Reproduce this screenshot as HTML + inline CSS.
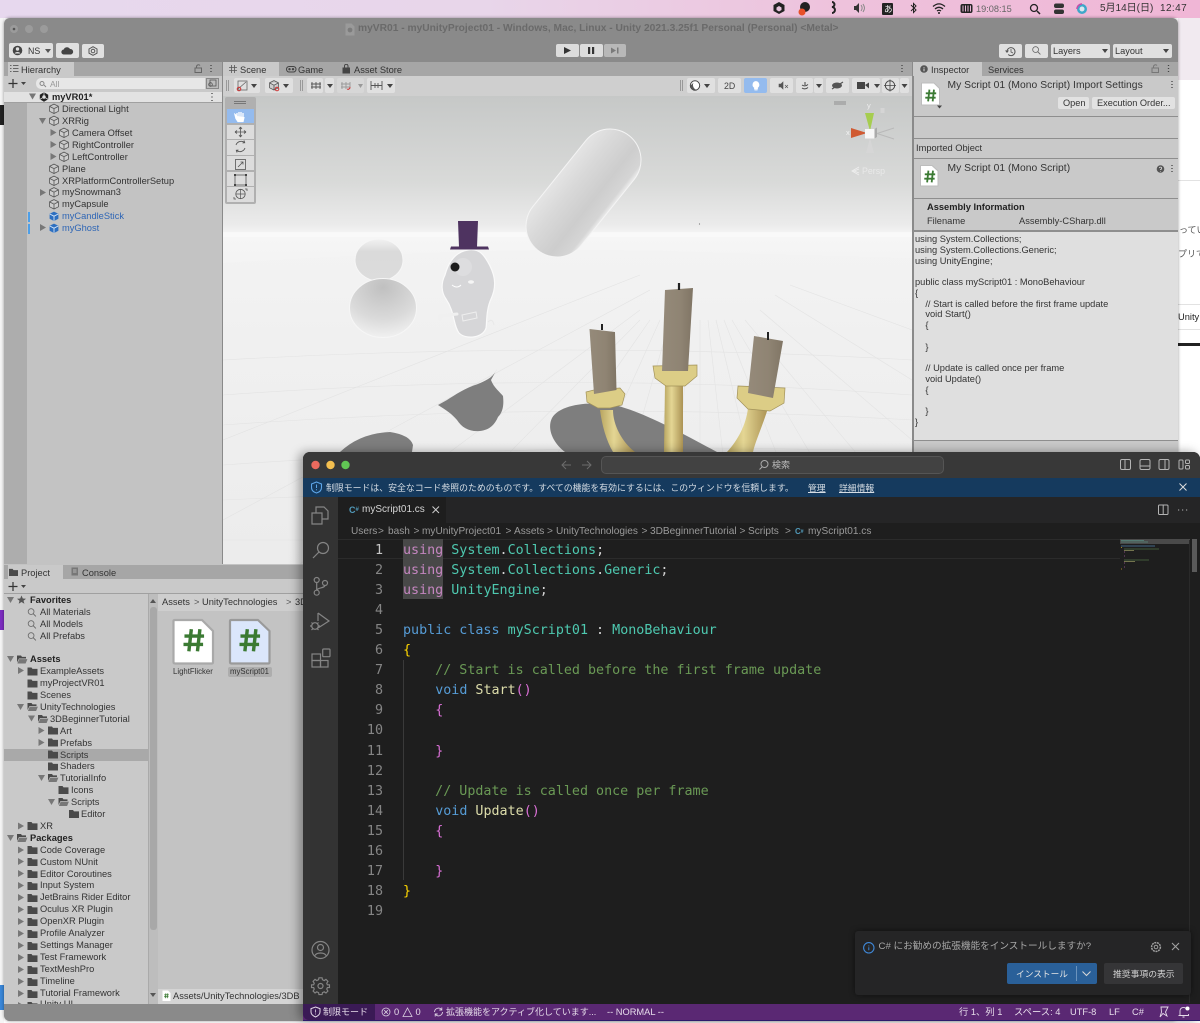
<!DOCTYPE html>
<html lang="ja">
<head>
<meta charset="utf-8">
<title>myVR01</title>
<style>
html,body{margin:0;padding:0;background:#fff}
#root{position:relative;width:1200px;height:1023px;overflow:hidden;font-family:"Liberation Sans","Noto Sans CJK JP",sans-serif;background:#fff;filter:blur(.35px)}
.b{position:absolute}
.r{position:absolute;white-space:nowrap;font-size:9.3px;line-height:12px;color:#333}
.s{position:absolute}
.bold{font-weight:bold;color:#222}
.btn{position:absolute;background:#e0e0e0;border-radius:2px}
.v{position:absolute;white-space:nowrap;font-size:9.4px;line-height:12px;color:#ccc}
.bc{position:absolute;white-space:nowrap;top:525.5px;font-size:10.1px;line-height:12px;color:#9a9a9a}
.ln{position:absolute;left:345px;width:38px;margin-top:1.5px;text-align:right;color:#858585;font:13.37px/20px "DejaVu Sans Mono","Liberation Mono",monospace}
.c{position:absolute;left:403px;margin-top:1.5px;white-space:pre;color:#d4d4d4;font:13.37px/20px "DejaVu Sans Mono","Liberation Mono",monospace}
.k{color:#c586c0}.t{color:#4ec9b0}.w{color:#569cd6}.g{color:#6a9955}.y{color:#ffd700}.f{color:#dcdcaa}.p{color:#da70d6}
</style>
</head>
<body>
<div id="root">
<svg width="0" height="0" style="position:absolute">
<defs>
<g id="cube"><path d="M5 .6 9.4 2.8V7.8L5 10 .6 7.8V2.8ZM.8 3 5 5.2 9.2 3M5 5.2V9.8" fill="#cdcdcd" stroke="#555" stroke-width=".8"/></g>
<g id="bcube"><path d="M5 .6 9.4 2.8V7.8L5 10 .6 7.8V2.8Z" fill="#2d6fc0"/><path d="M.8 3 5 5.2 9.2 3M5 5.2V9.8" fill="none" stroke="#d6e6f7" stroke-width=".9"/></g>
<path id="tr" d="M0 0 6 3.5 0 7Z" fill="#777"/>
<path id="td" d="M0 0H7L3.5 6Z" fill="#777"/>
<path id="fld" d="M0 1H4L5 2.4H10V9H0Z" fill="#4a4a4a"/>
<g id="fldo"><path d="M0 1H4L5 2.4H9V4H2L0 8Z" fill="#4a4a4a"/><path d="M2.2 4.6H10.4L8.6 9H.4Z" fill="#777"/></g>
<g id="mag"><circle cx="3.6" cy="3.6" r="2.9" fill="none" stroke="#666" stroke-width=".8"/><path d="M5.7 5.7 8.4 8.4" stroke="#666" stroke-width=".9"/></g>
<g id="hash"><path d="M3.4 .5 2.4 9.5M6.9 .5 5.9 9.5M.6 3.3H8.6M.2 6.7H8.2" stroke="#3b7a33" stroke-width="1.4" fill="none"/></g>
</defs>
</svg>

<!-- desktop / menu bar -->
<div class="b" style="left:0;top:0;width:1200px;height:18px;background:linear-gradient(90deg,#e7d8ee 0,#e8d6ea 40%,#eec2dc 70%,#f0b6d6 100%)"></div>
<div class="b" style="left:1178px;top:18px;width:22px;height:62px;background:#f1eaf0"></div>
<div class="b" style="left:0;top:18px;width:4px;height:1005px;background:#f5f5f5"></div>
<div class="b" style="left:0;top:105px;width:4px;height:20px;background:#222"></div>
<div class="b" style="left:0;top:610px;width:4px;height:20px;background:#7d2dc0"></div>
<div class="b" style="left:0;top:985px;width:4px;height:25px;background:#3a87d8"></div>
<div class="b" style="left:1178px;top:304px;width:22px;height:1px;background:#e2e2e2"></div>
<div class="b" style="left:1178px;top:329px;width:22px;height:1px;background:#e2e2e2"></div>
<div class="b" style="left:1178px;top:343px;width:22px;height:3px;background:#222"></div>
<div class="b" style="left:1178px;top:180px;width:22px;height:1px;background:#e2e2e2"></div>
<div class="r" style="left:1179px;top:224px;font-size:9px;width:21px;overflow:hidden;color:#555">ってい</div>
<div class="r" style="left:1178px;top:248px;font-size:9px;width:22px;overflow:hidden;color:#555">プリで</div>
<div class="r" style="left:1178px;top:311px;width:22px;overflow:hidden;color:#222">Unity</div>

<svg class="s" style="left:0;top:0" width="1200" height="18">
<g transform="translate(779,8)"><path d="M0-6 5.5-3V3L0 6-5.5 3V-3Z" fill="#222"/><path d="M0-2 2.5-.5V2L0 3.5-2.5 2V-.5Z" fill="#e9c6de"/></g>
<circle cx="805" cy="7" r="5" fill="#222"/><circle cx="802" cy="12" r="3.5" fill="#e8502a"/>
<path d="M832 2a2.5 2.5 0 1 1-.1 5 3 3 0 1 1 .1 6" fill="none" stroke="#222" stroke-width="2"/>
<path d="M854 6h2l3-3v10l-3-3h-2Z" fill="#333"/><path d="M861 5c1.500 2 1.500 4 0 6M863 4c2 3 2 5 0 8" stroke="#888" fill="none"/>
<rect x="882" y="3" width="11" height="12" rx="1" fill="#222"/>
<path d="M911 5 916 10 913.500 12.500V3.500L916 6 911 11" fill="none" stroke="#222"/>
<path d="M933 6.500c4-3.500 8-3.500 12 0M935 9c2.700-2.300 5.300-2.300 8 0M937 11c1.300-1 2.700-1 4 0" fill="none" stroke="#222" stroke-width="1.300"/><circle cx="939" cy="13" r="1" fill="#222"/>
<rect x="960.500" y="4" width="12" height="9" rx="2" fill="#222"/><path d="M963 5.500v6M965.500 5.500v6M968 5.500v6M970.500 5.500v6" stroke="#e9b8d8"/>
<circle cx="1034" cy="8" r="3.500" fill="none" stroke="#222" stroke-width="1.300"/><path d="M1037 11l3 3" stroke="#222" stroke-width="1.500"/>
<rect x="1054" y="3.500" width="10" height="4.500" rx="2" fill="#333"/><rect x="1054" y="9.500" width="10" height="4.500" rx="2" fill="#333"/>
<circle cx="1082" cy="9" r="5" fill="#3fa7c9"/><circle cx="1082" cy="9" r="2.500" fill="#dbe8f0"/><path d="M1077 9a5 5 0 0 1 5-5" stroke="#c44ea8" fill="none" stroke-width="1.500"/>
</svg>
<div class="r" style="left:884px;top:3px;font-size:8.500px;color:#eee">あ</div>
<div class="r" style="left:976px;top:3px;font-size:9.200px;color:#666">19:08:15</div>
<div class="r" style="left:1100px;top:3px;font-size:10px;color:#333">5月14日(日)</div>
<div class="r" style="left:1160px;top:3px;font-size:10px;color:#333;letter-spacing:.4px">12:47</div>

<!-- Unity window -->
<div class="b" style="left:4px;top:18px;width:1174px;height:1003px;background:#8a8a8a;border-radius:6px 6px 6px 6px;box-shadow:0 0 3px rgba(0,0,0,.4)"></div>
<svg class="s" style="left:4px;top:18px" width="60" height="24"><circle cx="10" cy="11" r="4" fill="#9b9b9b"/><circle cx="10" cy="11" r="1.300" fill="#555"/><circle cx="25" cy="11" r="4" fill="#9b9b9b"/><circle cx="40" cy="11" r="4" fill="#9b9b9b"/></svg>
<svg class="s" style="left:345px;top:23px" width="10" height="13"><path d="M.5.500H6.500L9.500 3.500V12.500H.5Z" fill="#9a9a9a"/><circle cx="5" cy="7" r="2.400" fill="#7c7c7c"/></svg>
<div class="r" style="left:358px;top:23px;font-size:10.240px;font-weight:bold;color:#6a6a6a">myVR01 - myUnityProject01 - Windows, Mac, Linux - Unity 2021.3.25f1 Personal (Personal) &lt;Metal&gt;</div>

<!-- top toolbar -->
<div class="btn" style="left:9px;top:43px;width:44px;height:15px"></div>
<svg class="s" style="left:12px;top:45px" width="40" height="11"><circle cx="5.500" cy="5.500" r="4.800" fill="#444"/><circle cx="5.500" cy="4" r="1.700" fill="#e0e0e0"/><path d="M2.500 8.500c1-2 5-2 6 0" fill="#e0e0e0"/><path d="M33 4h6l-3 4Z" fill="#555"/></svg>
<div class="r" style="left:28px;top:45px;font-size:8.800px">NS</div>
<div class="btn" style="left:56px;top:43px;width:23px;height:15px"></div>
<svg class="s" style="left:61px;top:46px" width="13" height="9"><path d="M3 8.500a2.500 2.500 0 0 1-.3-5A3.500 3.500 0 0 1 9 3a2.800 2.800 0 0 1 1 5.500Z" fill="#444"/></svg>
<div class="btn" style="left:82px;top:44px;width:22px;height:14px"></div>
<svg class="s" style="left:88px;top:46px" width="10" height="10"><path d="M5 .7 9 3V7.200L5 9.300 1 7.200V3Z" fill="none" stroke="#555"/><circle cx="5" cy="5" r="1.800" fill="none" stroke="#555"/></svg>

<div class="btn" style="left:556px;top:44px;width:23px;height:13px;background:#dcdcdc"></div>
<div class="btn" style="left:580px;top:44px;width:23px;height:13px;background:#dcdcdc"></div>
<div class="btn" style="left:604px;top:44px;width:22px;height:13px;background:#b8b8b8"></div>
<svg class="s" style="left:556px;top:44px" width="70" height="13"><path d="M8 3 15 6.500 8 10Z" fill="#333"/><path d="M32 3h2.200v7H32ZM36 3h2.200v7H36Z" fill="#333"/><path d="M55 3.500 60 6.500 55 9.500ZM61 3.500h1.500v6H61Z" fill="#7a7a7a"/></svg>

<div class="btn" style="left:999px;top:44px;width:23px;height:14px"></div>
<svg class="s" style="left:1005px;top:46px" width="12" height="11"><path d="M2 5.500a4 4 0 1 1 1.200 3" fill="none" stroke="#555"/><path d="M6 3v3l2 1" fill="none" stroke="#555" stroke-width=".8"/><path d="M0 4.500h4L2 7Z" fill="#555"/></svg>
<div class="btn" style="left:1025px;top:44px;width:23px;height:14px"></div>
<svg class="s" style="left:1032px;top:46px" width="11" height="10"><use href="#mag"/></svg>
<div class="btn" style="left:1051px;top:44px;width:59px;height:14px"></div>
<div class="r" style="left:1053px;top:45px;font-size:9.200px">Layers</div>
<svg class="s" style="left:1102px;top:49px" width="7" height="5"><path d="M0 0h6L3 4Z" fill="#444"/></svg>
<div class="btn" style="left:1113px;top:44px;width:59px;height:14px"></div>
<div class="r" style="left:1115px;top:45px;font-size:9.200px">Layout</div>
<svg class="s" style="left:1163px;top:49px" width="7" height="5"><path d="M0 0h6L3 4Z" fill="#444"/></svg>

<!-- Hierarchy -->
<div class="b" style="left:4px;top:62px;width:218px;height:502px;background:#c3c3c3"></div>
<div class="b" style="left:4px;top:62px;width:218px;height:14px;background:#a6a6a6"></div>
<div class="b" style="left:8px;top:62px;width:66px;height:14px;background:#c9c9c9"></div>
<svg class="s" style="left:10px;top:65px" width="9" height="8"><path d="M0 .5h1.500M3 .5h5.500M0 3.500h1.500M3 3.500h5.500M0 6.500h1.500M3 6.500h5.500" stroke="#666"/></svg>
<div class="r" style="left:21px;top:63.500px">Hierarchy</div>
<svg class="s" style="left:194px;top:64px" width="20" height="10"><rect x="1" y="4" width="6.500" height="4.500" fill="none" stroke="#666"/><path d="M2.500 4V2.500a2 2 0 0 1 3.500-1" fill="none" stroke="#666"/><path d="M17 1v1M17 4v1M17 7v1" stroke="#444" stroke-width="1.300"/></svg>
<div class="b" style="left:4px;top:76px;width:218px;height:16px;background:#c9c9c9"></div>
<svg class="s" style="left:8px;top:78px" width="20" height="11"><path d="M5 1v9M.5 5.500h9" stroke="#333" stroke-width="1.200"/><path d="M13 4h5l-2.500 3Z" fill="#444"/></svg>
<div class="b" style="left:36px;top:78px;width:169px;height:11px;background:#e7e7e7;border-radius:5px 0 0 5px"></div>
<svg class="s" style="left:39px;top:80px" width="9" height="8"><circle cx="3" cy="3.500" r="2" fill="none" stroke="#888"/><path d="M5 5l2 2" stroke="#888"/></svg>
<div class="r" style="left:50px;top:77.500px;font-size:8.500px;color:#999">All</div>
<div class="b" style="left:206px;top:78px;width:13px;height:11px;background:#bcbcbc;border:1px solid #888;box-sizing:border-box"></div>
<svg class="s" style="left:207px;top:79px" width="11" height="9"><rect x="3" y="1" width="6" height="6" fill="none" stroke="#555" stroke-width=".8"/><circle cx="3.500" cy="5.500" r="1.800" fill="none" stroke="#555" stroke-width=".8"/></svg>
<div class="b" style="left:4px;top:103px;width:23px;height:461px;background:#adadad"></div>
<div class="b" style="left:4px;top:92px;width:218px;height:11px;background:#e2e2e2;border-bottom:1px solid #a0a0a0;box-sizing:border-box"></div>
<div class="b" style="left:28px;top:212px;width:1.500px;height:10px;background:#4d9fe8"></div>
<div class="b" style="left:28px;top:224px;width:1.500px;height:10px;background:#4d9fe8"></div>
<svg class="s" style="left:0;top:90px" width="222" height="150">
<use href="#td" x="29" y="3.500"/>
<g transform="translate(44,7)"><path d="M0-4.700 4.200-2.300V2.300L0 4.700-4.200 2.300V-2.300Z" fill="#222"/><circle r="1.700" fill="#e2e2e2"/><path d="M0-4.500V-1.500M-3.900 2.200-1.300.7M3.900 2.200 1.300.7" stroke="#e2e2e2" stroke-width=".8"/></g>
<path d="M212 3v1M212 6.500v1M212 10v1" stroke="#444" stroke-width="1.300"/>
<use href="#cube" x="49" y="13.500"/>
<use href="#td" x="39" y="28"/><use href="#cube" x="49" y="25.500"/>
<use href="#tr" x="50.500" y="39"/><use href="#cube" x="59" y="37.500"/>
<use href="#tr" x="50.500" y="51"/><use href="#cube" x="59" y="49.500"/>
<use href="#tr" x="50.500" y="63"/><use href="#cube" x="59" y="61.500"/>
<use href="#cube" x="49" y="73.500"/>
<use href="#cube" x="49" y="85.500"/>
<use href="#tr" x="40" y="99"/><use href="#cube" x="49" y="97"/>
<use href="#cube" x="49" y="109"/>
<use href="#bcube" x="49" y="121"/>
<use href="#tr" x="40" y="134"/><use href="#bcube" x="49" y="133"/>
</svg>
<div class="r bold" style="left:52px;top:91px">myVR01*</div>
<div class="r" style="left:62px;top:102.500px">Directional Light</div>
<div class="r" style="left:62px;top:114.500px">XRRig</div>
<div class="r" style="left:72px;top:126.500px">Camera Offset</div>
<div class="r" style="left:72px;top:138.500px">RightController</div>
<div class="r" style="left:72px;top:150.500px">LeftController</div>
<div class="r" style="left:62px;top:162.500px">Plane</div>
<div class="r" style="left:62px;top:174.500px">XRPlatformControllerSetup</div>
<div class="r" style="left:62px;top:186px">mySnowman3</div>
<div class="r" style="left:62px;top:198px">myCapsule</div>
<div class="r" style="left:62px;top:210px;color:#2f66b5">myCandleStick</div>
<div class="r" style="left:62px;top:222px;color:#2f66b5">myGhost</div>

<!-- Scene tabs -->
<div class="b" style="left:223px;top:62px;width:689px;height:14px;background:#a6a6a6"></div>
<div class="b" style="left:223px;top:62px;width:56px;height:14px;background:#c9c9c9"></div>
<svg class="s" style="left:229px;top:65px" width="8" height="8"><path d="M2.500 0V8M5.500 0V8M0 2.500H8M0 5.500H8" stroke="#555" stroke-width=".8"/></svg>
<div class="r" style="left:240px;top:63.500px">Scene</div>
<svg class="s" style="left:286px;top:66px" width="11" height="7"><rect x=".5" y=".5" width="9.500" height="5.500" rx="2.700" fill="none" stroke="#444"/><circle cx="3.500" cy="3.200" r="1.200" fill="#444"/><circle cx="7" cy="3.200" r="1.200" fill="#444"/></svg>
<div class="r" style="left:298px;top:63.500px">Game</div>
<svg class="s" style="left:342px;top:64px" width="9" height="10"><path d="M.5 3.500h7.500V9.500H.5Z" fill="#444"/><path d="M2.500 3.500V2a1.700 1.700 0 0 1 3.500 0V3.500" fill="none" stroke="#444"/></svg>
<div class="r" style="left:354px;top:63.500px">Asset Store</div>
<svg class="s" style="left:900px;top:64px" width="6" height="10"><path d="M2 1v1M2 4v1M2 7v1" stroke="#444" stroke-width="1.300"/></svg>

<!-- Scene view -->
<svg class="s" style="left:223px;top:76px" width="689" height="488" viewBox="223 76 689 488">
<defs>
<linearGradient id="sky" x1="0" y1="0" x2="0" y2="1"><stop offset="0" stop-color="#c6c8c7"/><stop offset=".5" stop-color="#d9dad9"/><stop offset=".74" stop-color="#ebebeb"/><stop offset=".8" stop-color="#f6f6f6"/><stop offset="1" stop-color="#f3f3f3"/></linearGradient>
<linearGradient id="gnd" x1="0" y1="0" x2="0" y2="1"><stop offset="0" stop-color="#f3f3f3"/><stop offset=".3" stop-color="#f0f0f0"/><stop offset="1" stop-color="#ececec"/></linearGradient>
<linearGradient id="cap" gradientUnits="userSpaceOnUse" x1="559" y1="174" x2="607" y2="212"><stop offset="0" stop-color="#e4e4e4"/><stop offset=".3" stop-color="#d9d9d9"/><stop offset=".7" stop-color="#cdcdcd"/><stop offset=".94" stop-color="#d5d5d5"/><stop offset="1" stop-color="#e8e8e8"/></linearGradient>
<radialGradient id="sm" cx=".5" cy=".15" r=".9"><stop offset="0" stop-color="#c0c0c0"/><stop offset=".6" stop-color="#dadada"/><stop offset="1" stop-color="#f4f4f4"/></radialGradient>
<linearGradient id="sm2" x1="0" y1="0" x2="0" y2="1"><stop offset="0" stop-color="#f2f2f2"/><stop offset=".3" stop-color="#dadada"/><stop offset="1" stop-color="#dcdcdc"/></linearGradient>
<linearGradient id="gold" x1="0" y1="0" x2="1" y2="0"><stop offset="0" stop-color="#b9a661"/><stop offset=".4" stop-color="#e4d694"/><stop offset="1" stop-color="#ab9253"/></linearGradient>
<linearGradient id="tan" x1="0" y1="0" x2="1" y2="0"><stop offset="0" stop-color="#958a7a"/><stop offset=".6" stop-color="#8f8473"/><stop offset="1" stop-color="#807565"/></linearGradient>
</defs>
<rect x="223" y="96" width="689" height="174" fill="url(#sky)"/>
<rect x="223" y="232" width="689" height="5" fill="#fbfbfb" opacity=".6"/>
<path d="M223 263Q500 245 700 252Q810 255 912 258V564H223Z" fill="url(#gnd)"/>
<g stroke="#e3e3e3" stroke-width=".6" fill="none">
<path d="M640 275 223 440M650 290 223 520M640 310 300 564M640 320 400 564M650 320 480 564M660 320 550 564M670 320 600 564M680 320 640 564M690 320 670 564M700 320 700 564M708 320 735 564M716 320 775 564M724 320 820 564M732 320 875 564M745 320 912 520M760 310 912 440M775 295 912 380M790 285 912 330"/>
<path d="M223 540H912M223 500Q570 484 912 490M223 465Q570 440 912 452M223 425Q570 400 912 420M223 395Q570 370 912 395M223 360Q570 340 912 360"/>
</g>
<!-- capsule -->
<line x1="610" y1="160" x2="557" y2="226" stroke="#f4f4f4" stroke-width="63" stroke-linecap="round"/>
<line x1="610" y1="160" x2="557" y2="226" stroke="url(#cap)" stroke-width="61" stroke-linecap="round"/>
<!-- snowman -->
<ellipse cx="379" cy="260" rx="24" ry="21" fill="url(#sm2)" stroke="#f6f6f6"/>
<ellipse cx="383" cy="308" rx="33.500" ry="29.500" fill="url(#sm)" stroke="#f6f6f6"/>
<!-- shadows -->
<path d="M497 369C494 376 488 380 478 384C465 388 455 395 447 400L438 405C446 410 452 414 457 420C462 428 470 432 480 431C490 430 495 424 498 417C503 412 504 405 503 396C500 392 494 388 491 380Z" fill="#7e7e7e"/>
<path d="M340 452Q360 433 390 432Q410 435 413 445L412 452Z" fill="#7e7e7e"/>
<path d="M565 452C552 442 547 428 552 418C560 405 585 402 610 404C640 410 680 432 717 452Z" fill="#7e7e7e"/>
<!-- ghost -->
<path d="M468 250C480 248 485 256 490 266C496 278 496 288 491 299C486 310 487 322 486 328C483 338 466 340 459 333C453 325 455 312 446 299C441 292 441 283 445 275C448 264 454 252 468 250Z" fill="#d6d6d8" stroke="#fafafa" stroke-width="1.200"/>
<path d="M457 314 440 316M440 316v3" stroke="#f0f0f0" stroke-width="3" stroke-linecap="round"/>
<path d="M488 322c3-3 5-2 6 3" stroke="#e8e8e8" fill="none"/>
<circle cx="463" cy="267" r="9" fill="#dddddf"/>
<circle cx="455" cy="267" r="4.500" fill="#1c1c1c"/>
<path d="M452 285q5 4 9 0" stroke="#fff" fill="none"/>
<ellipse cx="471" cy="282" rx="3" ry="1.700" fill="#f5f5f5"/>
<path d="M462 315 476 312 477 318 463 321Z" fill="none" stroke="#eee"/>
<path d="M458 221H478L477 247H459Z" fill="#4e3360"/>
<path d="M451 246.500H488L489 249.500H450Z" fill="#4e3360"/>
<!-- left candle -->
<path d="M600 410H613C613 425 622 442 635 452H613C606 440 602 425 600 410Z" fill="url(#gold)"/>
<path d="M586 392 594 390 620 388 625 394 622 405 610 408 598 408 587 402Z" fill="#dccd86" stroke="#a2925a" stroke-width=".7"/>
<path d="M589.500 329 615 332 616.500 390 594 394Z" fill="url(#tan)"/>
<path d="M602 324v6" stroke="#222" stroke-width="2"/>
<!-- center candle -->
<path d="M665 384H683V452H664Z" fill="url(#gold)"/>
<path d="M653 366 697 365 697 376 685 386H666L655 378Z" fill="#dccd86" stroke="#a2925a" stroke-width=".7"/>
<path d="M665 290 693 288 688 371 662 371Z" fill="url(#tan)"/>
<path d="M679 283v7" stroke="#222" stroke-width="2.200"/>
<!-- right candle -->
<path d="M748 408H768C763 425 755 442 753 452H727C738 440 746 425 748 408Z" fill="url(#gold)"/>
<path d="M738 386 785 388 784 403 770 411 748 409 737 398Z" fill="#dccd86" stroke="#a2925a" stroke-width=".7"/>
<path d="M754 336 783 341 773 398 748 393Z" fill="url(#tan)"/>
<path d="M768 332v8" stroke="#222" stroke-width="2"/>
<!-- point -->
<circle cx="699.500" cy="224" r=".6" fill="#777"/>
</svg>

<!-- Scene toolbar -->
<div class="b" style="left:223px;top:76px;width:689px;height:20px;background:#cfcfcf"></div>
<div class="b" style="left:226px;top:80px;width:1px;height:11px;background:#999;box-shadow:2px 0 0 #999"></div>
<div class="btn" style="left:234px;top:78px;width:26px;height:15px"></div>
<div class="btn" style="left:265px;top:78px;width:28px;height:15px"></div>
<div class="b" style="left:300px;top:80px;width:1px;height:11px;background:#999;box-shadow:2px 0 0 #999"></div>
<div class="btn" style="left:307px;top:78px;width:16px;height:15px"></div>
<div class="btn" style="left:325px;top:78px;width:9px;height:15px"></div>
<div class="btn" style="left:337px;top:78px;width:27px;height:15px;background:#d7d7d7"></div>
<div class="btn" style="left:367px;top:78px;width:28px;height:15px"></div>
<svg class="s" style="left:234px;top:78px" width="170" height="15">
<rect x="4" y="3" width="9" height="9" fill="none" stroke="#666" stroke-width=".8"/><path d="M4 11 12 4" stroke="#666" stroke-width=".8"/><circle cx="5" cy="11" r="1.800" fill="none" stroke="#c33" stroke-width="1"/><path d="M17 6h6l-3 4Z" fill="#444"/>
<use href="#cube" x="35" y="2"/><circle cx="43" cy="11" r="1.800" fill="none" stroke="#c33"/><path d="M49 6h6l-3 4Z" fill="#444"/>
<path d="M78 4V11M82 4V11M86 4V11M77 6h10M77 9h10" stroke="#555" stroke-width=".9"/><path d="M93 6h6l-3 4Z" fill="#444"/>
<path d="M108 4V11M112 4V11M116 4V9M107 6h9M107 9h9" stroke="#999" stroke-width=".9"/><path d="M113 11a2 2 0 0 0 3-2" stroke="#c33" fill="none"/><path d="M124 6h5l-2.500 4Z" fill="#999"/>
<path d="M137 3V12M148 3V12M137 7.500h11M141 5V10M144 5V10" stroke="#555" stroke-width=".9"/><path d="M153 6h6l-3 4Z" fill="#444"/>
</svg>
<div class="b" style="left:680px;top:80px;width:1px;height:11px;background:#999;box-shadow:2px 0 0 #999"></div>
<div class="btn" style="left:687px;top:78px;width:28px;height:15px"></div>
<div class="btn" style="left:718px;top:78px;width:23px;height:15px"></div>
<div class="r" style="left:724px;top:79.500px;font-size:8.800px;color:#444">2D</div>
<div class="btn" style="left:744px;top:78px;width:23px;height:15px;background:#94bbee"></div>
<div class="btn" style="left:770px;top:78px;width:23px;height:15px"></div>
<div class="btn" style="left:796px;top:78px;width:17px;height:15px"></div>
<div class="btn" style="left:814px;top:78px;width:9px;height:15px"></div>
<div class="btn" style="left:826px;top:78px;width:23px;height:15px"></div>
<div class="btn" style="left:852px;top:78px;width:28px;height:15px"></div>
<div class="btn" style="left:882px;top:78px;width:17px;height:15px"></div>
<div class="btn" style="left:900px;top:78px;width:9px;height:15px"></div>
<svg class="s" style="left:687px;top:78px" width="225" height="15">
<circle cx="8" cy="7.500" r="4.700" fill="#fff" stroke="#444"/><path d="M3.500 7.500a4.700 4.700 0 0 0 6 4.300 5 5 0 0 1-3-7Z" fill="#555"/><path d="M17 6h6l-3 4Z" fill="#444"/>
<path d="M68.500 3.500a3.300 3.300 0 0 1 2 6v1.500h-3v-1.500a3.300 3.300 0 0 1 1-6ZM67.500 12h3" fill="#fff" stroke="#fff" stroke-width=".8"/>
<path d="M92 6h2l2-2V11L94 9h-2ZM98 7l3 3M101 7l-3 3" fill="#555" stroke="#555" stroke-width=".6"/>
<path d="M115 10q3 2 6-.5M115 7q3 2 6-.5M118 4v3" stroke="#444" fill="none"/><path d="M129 6h6l-3 4Z" fill="#444"/>
<ellipse cx="150" cy="7.500" rx="5" ry="3" fill="#555"/><path d="M145 11 156 4" stroke="#555" stroke-width="1.200"/>
<rect x="170" y="4" width="8" height="7" fill="#444"/><path d="M178 7 182 4.500V10.500Z" fill="#444"/><path d="M187 6h6l-3 4Z" fill="#444"/>
<circle cx="203" cy="7.500" r="4.700" fill="none" stroke="#444"/><path d="M203 1.500V13.500M197 7.500H209" stroke="#444" stroke-width=".8"/><path d="M214.500 6h6l-3 4Z" fill="#444"/>
</svg>

<!-- Scene toolbox -->
<div class="b" style="left:225px;top:97px;width:31px;height:107px;background:#b0b0b0;border-radius:2px"></div>
<div class="b" style="left:234px;top:101px;width:12px;height:1px;background:#777;box-shadow:0 2px 0 #777"></div>
<div class="b" style="left:227px;top:109px;width:27px;height:14px;background:#94bbee"></div>
<div class="b" style="left:227px;top:125px;width:27px;height:14px;background:#dcdcdc"></div>
<div class="b" style="left:227px;top:140px;width:27px;height:15px;background:#dcdcdc"></div>
<div class="b" style="left:227px;top:156px;width:27px;height:14px;background:#dcdcdc"></div>
<div class="b" style="left:227px;top:172px;width:27px;height:14px;background:#dcdcdc"></div>
<div class="b" style="left:227px;top:187px;width:27px;height:15px;background:#dcdcdc"></div>
<svg class="s" style="left:227px;top:109px" width="27" height="93">
<path d="M10 4V8M12 3V8M14 3V8M16 4V9M10 7 8 5.500 9 9.500 11 12.500H16L17 8" fill="#fff" stroke="#fff" stroke-width="1.300"/>
<path d="M13.500 18V28M8 23H19M13.500 18l-1.500 2M13.500 18l1.500 2M13.500 28l-1.500-2M13.500 28l1.500-2M8 23l2-1.500M8 23l2 1.500M19 23l-2-1.500M19 23l-2 1.500" stroke="#555" fill="none" stroke-width=".8"/>
<path d="M9 36a5.500 5.500 0 0 1 8.500-2.500M18 39a5.500 5.500 0 0 1-8.500 2.500M17 31.500l.7 2.200-2.200.2M10 43.500 9.300 41.300l2.200-.2" stroke="#555" fill="none" stroke-width=".9"/>
<rect x="8.500" y="50.500" width="10" height="10" fill="none" stroke="#555" stroke-width=".8"/><path d="M11 58 16 53M13.500 53H16V55.500" stroke="#555" fill="none" stroke-width=".8"/>
<rect x="8" y="66" width="11" height="10" fill="none" stroke="#555" stroke-width=".8"/><path d="M7 65h2v2H7ZM18 65h2v2h-2ZM7 75h2v2H7ZM18 75h2v2h-2Z" fill="#444"/>
<circle cx="13.500" cy="85" r="4.700" fill="none" stroke="#555" stroke-width=".8"/><path d="M13.500 80V90M8.800 85H18.200" stroke="#555" stroke-width=".7"/><path d="M18 80h2v2M9 90H7V88" stroke="#555" fill="none" stroke-width=".8"/>
</svg>

<!-- Gizmo -->
<svg class="s" style="left:830px;top:95px" width="82" height="90">
<path d="M4 7h12M4 9h12" stroke="#8f8f8f" stroke-width=".9"/>
<path d="M35 18 44 18 40 36Z" fill="#a6cd4f"/>
<path d="M21 33 37 38 21 43Z" fill="#d05a32" stroke-linejoin="round"/>
<path d="M40 43 36 58H44Z" fill="#d6d6d6"/>
<path d="M64 33 47 38.500 64 44" fill="none" stroke="#b9b9b9" stroke-width="1"/>
<rect x="35" y="34" width="9.500" height="9.500" fill="#f7f7f7"/><path d="M44.500 34 47 32.500V42L44.500 43.500Z" fill="#aaa"/>
<rect x="50.500" y="13" width="4" height="5" fill="#d5d5d5"/>
</svg>
<div class="r" style="left:867px;top:100px;font-size:7.500px;color:#eee">y</div>
<div class="r" style="left:846px;top:127px;font-size:7.500px;color:#f2f2f2">x</div>
<div class="r" style="left:862px;top:165px;font-size:8.800px;color:#e9e9e9">Persp</div>
<svg class="s" style="left:851px;top:166px" width="10" height="10"><path d="M8 1 1 5 8 9M8 3 3 5 8 7" fill="none" stroke="#eee" stroke-width=".9"/></svg>

<!-- Inspector -->
<div class="b" style="left:913px;top:62px;width:265px;height:14px;background:#a6a6a6"></div>
<div class="b" style="left:913px;top:62px;width:69px;height:14px;background:#c9c9c9"></div>
<svg class="s" style="left:920px;top:65px" width="8" height="8"><circle cx="4" cy="4" r="3.800" fill="#555"/><path d="M4 2v.8M4 3.500V6.200" stroke="#ddd"/></svg>
<div class="r" style="left:931px;top:63.500px">Inspector</div>
<div class="r" style="left:988px;top:63.500px">Services</div>
<svg class="s" style="left:1151px;top:64px" width="22" height="10"><rect x="1" y="4" width="6.500" height="4.500" fill="none" stroke="#777"/><path d="M2.500 4V2.500a2 2 0 0 1 3.500-1" fill="none" stroke="#777"/><path d="M17.500 1v1M17.500 4v1M17.500 7v1" stroke="#444" stroke-width="1.300"/></svg>
<div class="b" style="left:913px;top:76px;width:265px;height:376px;background:#c9c9c9;border-left:1px solid #8a8a8a;box-sizing:border-box"></div>
<svg class="s" style="left:920px;top:82px" width="24" height="28">
<path d="M1.500 1H14L19.500 6.500V23H1.500Z" fill="#fff" stroke="#bdbdbd" stroke-linejoin="round"/>
<g transform="translate(5,7) scale(1.300)"><use href="#hash"/></g>
<path d="M17 23.500h5L19.500 26.500Z" fill="#444"/>
</svg>
<div class="r" style="left:947.500px;top:79.500px;font-size:10.300px;letter-spacing:.03px">My Script 01 (Mono Script) Import Settings</div>
<svg class="s" style="left:1170px;top:80px" width="5" height="10"><path d="M2 1v1M2 4v1M2 7v1" stroke="#444" stroke-width="1.300"/></svg>
<div class="btn" style="left:1058px;top:97px;width:31px;height:12px;background:#e2e2e2"></div>
<div class="r" style="left:1063px;top:97px;font-size:9.200px">Open</div>
<div class="btn" style="left:1092px;top:97px;width:83px;height:12px;background:#e2e2e2"></div>
<div class="r" style="left:1097px;top:97px;font-size:9.200px">Execution Order...</div>
<div class="b" style="left:914px;top:116px;width:264px;height:1px;background:#8e8e8e"></div>
<div class="b" style="left:914px;top:138px;width:264px;height:1px;background:#8e8e8e"></div>
<div class="r" style="left:916px;top:142px">Imported Object</div>
<div class="b" style="left:914px;top:158px;width:264px;height:1px;background:#8e8e8e"></div>
<svg class="s" style="left:919px;top:164px" width="22" height="24">
<path d="M1.500 1.500H13L19 7V22H1.500Z" fill="#fff" stroke="#bdbdbd" stroke-linejoin="round"/>
<g transform="translate(5,6) scale(1.300)"><use href="#hash"/></g>
</svg>
<div class="r" style="left:947.500px;top:163px;font-size:10.300px;letter-spacing:.03px">My Script 01 (Mono Script)</div>
<svg class="s" style="left:1156px;top:164px" width="20" height="10"><circle cx="4.500" cy="5" r="3.800" fill="#555"/><path d="M3.300 4a1.200 1.200 0 1 1 1.200 1.500V6M4.500 7v.6" stroke="#ddd" fill="none" stroke-width=".8"/><path d="M16 1v1M16 4v1M16 7v1" stroke="#444" stroke-width="1.300"/></svg>
<div class="b" style="left:914px;top:198px;width:264px;height:1px;background:#8e8e8e"></div>
<div class="r bold" style="left:927px;top:201px">Assembly Information</div>
<div class="r" style="left:927px;top:214.500px">Filename</div>
<div class="r" style="left:1019px;top:214.500px">Assembly-CSharp.dll</div>
<div class="b" style="left:913px;top:230px;width:265px;height:1.500px;background:#8e8e8e"></div>
<div class="b" style="left:914px;top:232px;width:264px;height:208px;background:#dfdfdf"></div>
<div class="b" style="left:913px;top:440px;width:265px;height:1px;background:#8e8e8e"></div>
<pre style="position:absolute;left:915px;top:234px;margin:0;font:9.300px/10.750px 'Liberation Sans',sans-serif;color:#333">using System.Collections;
using System.Collections.Generic;
using UnityEngine;

public class myScript01 : MonoBehaviour
{
    // Start is called before the first frame update
    void Start()
    {

    }

    // Update is called once per frame
    void Update()
    {

    }
}</pre>

<!-- Project panel -->
<div class="b" style="left:4px;top:564px;width:299px;height:444px;background:#c3c3c3"></div>
<div class="b" style="left:4px;top:565px;width:299px;height:14px;background:#a6a6a6"></div>
<div class="b" style="left:8px;top:565px;width:55px;height:14px;background:#c9c9c9"></div>
<svg class="s" style="left:9px;top:568px" width="9" height="8"><use href="#fld" transform="scale(.9)"/></svg>
<div class="r" style="left:21px;top:566.500px">Project</div>
<svg class="s" style="left:71px;top:567px" width="8" height="10"><rect x=".5" y=".5" width="6.500" height="8" fill="#777"/><path d="M2 3h3.500M2 5h3.500" stroke="#ccc" stroke-width=".7"/></svg>
<div class="r" style="left:82px;top:566.500px">Console</div>
<div class="b" style="left:4px;top:579px;width:299px;height:15px;background:#c9c9c9;border-bottom:1px solid #a0a0a0;box-sizing:border-box"></div>
<svg class="s" style="left:8px;top:581px" width="20" height="11"><path d="M5 1v9M.5 5.500h9" stroke="#333" stroke-width="1.200"/><path d="M13 4h5l-2.500 3Z" fill="#444"/></svg>
<div class="b" style="left:4px;top:594px;width:144px;height:414px;background:#c9c9c9"></div>
<div class="b" style="left:148px;top:594px;width:10px;height:414px;background:#bdbdbd;border-left:1px solid #aaa;box-sizing:border-box"></div>
<div class="b" style="left:150px;top:607px;width:7px;height:323px;background:#a8a8a8;border-radius:3px"></div>
<svg class="s" style="left:150px;top:598px" width="8" height="404"><path d="M0 5h6L3 1Z" fill="#555"/><path d="M0 395h6L3 399Z" fill="#555"/></svg>
<div class="b" style="left:158px;top:594px;width:145px;height:17px;background:#cecece"></div>
<div class="r" style="left:162px;top:596px">Assets</div>
<div class="r" style="left:194px;top:596px;color:#555">&gt;</div>
<div class="r" style="left:202px;top:596px">UnityTechnologies</div>
<div class="r" style="left:286px;top:596px;color:#555">&gt;</div>
<div class="r" style="left:295px;top:596px">3D</div>
<div class="b" style="left:4px;top:749px;width:144px;height:11.500px;background:#a9a9a9"></div>

<svg class="s" style="left:170px;top:617px" width="105" height="50">
<path d="M3.500 4C3.500 3.500 4 3 5 3H32L43 14V45C43 46 42.500 46.500 42 46.500H5C4 46.500 3.500 46 3.500 45Z" fill="#fff" stroke="#a9a9a9" stroke-width="2.200" stroke-linejoin="round"/>
<g transform="translate(13,11) scale(2.450)"><use href="#hash"/></g>
<path d="M60 4C60 3.500 60.500 3 61.500 3H88L99.500 14V45C99.500 46 99 46.500 98.500 46.500H61.500C60.500 46.500 60 46 60 45Z" fill="#dbe6fb" stroke="#9a9a9a" stroke-width="2.200" stroke-linejoin="round"/>
<g transform="translate(69,11) scale(2.450)"><use href="#hash"/></g>
</svg>
<div class="r" style="left:173px;top:665.500px;font-size:7.800px;color:#333">LightFlicker</div>
<div class="b" style="left:228px;top:667px;width:44px;height:9.500px;background:#adadad;border-radius:2px"></div>
<div class="r" style="left:230px;top:665.500px;font-size:7.800px;color:#333">myScript01</div>
<div class="b" style="left:158px;top:989px;width:145px;height:15px;background:#d4d4d4"></div>
<svg class="s" style="left:162px;top:990px" width="9" height="12"><path d="M.5.500H6L8.500 3V11H.5Z" fill="#fff"/><g transform="translate(2,3) scale(.55)"><use href="#hash"/></g></svg>
<div class="r" style="left:173px;top:990px">Assets/UnityTechnologies/3DB</div>

<svg class="s" style="left:0;top:590px" width="148" height="418">
<use href="#td" x="7" y="7"/><path d="M21.500 5.500l1.300 3 3.200.2-2.500 2 .9 3.100-2.900-1.800-2.800 1.800.8-3.100-2.500-2 3.200-.2Z" fill="#555"/>
<use href="#mag" x="27.500" y="18"/><use href="#mag" x="27.500" y="30"/><use href="#mag" x="27.500" y="42"/>
<use href="#td" x="7" y="66"/><use href="#fldo" x="17" y="64.500"/>
<use href="#tr" x="18" y="77"/><use href="#fld" x="27.500" y="76.500"/>
<use href="#fld" x="27.500" y="88.500"/><use href="#fld" x="27.500" y="100.500"/>
<use href="#td" x="17" y="114"/><use href="#fldo" x="27.500" y="112"/>
<use href="#td" x="28" y="125.500"/><use href="#fldo" x="38" y="124"/>
<use href="#tr" x="38.500" y="137"/><use href="#fld" x="48" y="135.500"/>
<use href="#tr" x="38.500" y="149"/><use href="#fld" x="48" y="147.500"/>
<use href="#fld" x="48" y="159.500"/><use href="#fld" x="48" y="171.500"/>
<use href="#td" x="38" y="185"/><use href="#fldo" x="48" y="183"/>
<use href="#fld" x="58.500" y="195"/>
<use href="#td" x="48" y="209"/><use href="#fldo" x="58.500" y="207"/>
<use href="#fld" x="69" y="219"/>
<use href="#tr" x="18" y="232.500"/><use href="#fld" x="27.500" y="231"/>
<use href="#td" x="7" y="245"/><use href="#fldo" x="17" y="243"/>
<use href="#tr" x="18" y="256.500"/><use href="#fld" x="27.500" y="255"/>
<use href="#tr" x="18" y="268"/><use href="#fld" x="27.500" y="267"/>
<use href="#tr" x="18" y="280"/><use href="#fld" x="27.500" y="279"/>
<use href="#tr" x="18" y="292"/><use href="#fld" x="27.500" y="291"/>
<use href="#tr" x="18" y="304"/><use href="#fld" x="27.500" y="303"/>
<use href="#tr" x="18" y="316"/><use href="#fld" x="27.500" y="315"/>
<use href="#tr" x="18" y="328"/><use href="#fld" x="27.500" y="327"/>
<use href="#tr" x="18" y="340"/><use href="#fld" x="27.500" y="339"/>
<use href="#tr" x="18" y="352"/><use href="#fld" x="27.500" y="351"/>
<use href="#tr" x="18" y="364"/><use href="#fld" x="27.500" y="363"/>
<use href="#tr" x="18" y="376"/><use href="#fld" x="27.500" y="375"/>
<use href="#tr" x="18" y="388"/><use href="#fld" x="27.500" y="387"/>
<use href="#tr" x="18" y="400"/><use href="#fld" x="27.500" y="399"/>
<use href="#tr" x="18" y="412"/><use href="#fld" x="27.500" y="411"/>
</svg>
<div class="r bold" style="left:30px;top:594px">Favorites</div>
<div class="r" style="left:40px;top:606px">All Materials</div>
<div class="r" style="left:40px;top:618px">All Models</div>
<div class="r" style="left:40px;top:630px">All Prefabs</div>
<div class="r bold" style="left:30px;top:653px">Assets</div>
<div class="r" style="left:40px;top:665px">ExampleAssets</div>
<div class="r" style="left:40px;top:677px">myProjectVR01</div>
<div class="r" style="left:40px;top:689px">Scenes</div>
<div class="r" style="left:40px;top:701px">UnityTechnologies</div>
<div class="r" style="left:50px;top:712.500px">3DBeginnerTutorial</div>
<div class="r" style="left:60px;top:724.500px">Art</div>
<div class="r" style="left:60px;top:736.500px">Prefabs</div>
<div class="r" style="left:60px;top:748.500px">Scripts</div>
<div class="r" style="left:60px;top:760px">Shaders</div>
<div class="r" style="left:60px;top:772px">TutorialInfo</div>
<div class="r" style="left:71px;top:784px">Icons</div>
<div class="r" style="left:71px;top:796px">Scripts</div>
<div class="r" style="left:81px;top:808px">Editor</div>
<div class="r" style="left:40px;top:820px">XR</div>
<div class="r bold" style="left:30px;top:832px">Packages</div>
<div class="r" style="left:40px;top:844px">Code Coverage</div>
<div class="r" style="left:40px;top:855.500px">Custom NUnit</div>
<div class="r" style="left:40px;top:867.500px">Editor Coroutines</div>
<div class="r" style="left:40px;top:879px">Input System</div>
<div class="r" style="left:40px;top:891px">JetBrains Rider Editor</div>
<div class="r" style="left:40px;top:903px">Oculus XR Plugin</div>
<div class="r" style="left:40px;top:915px">OpenXR Plugin</div>
<div class="r" style="left:40px;top:927px">Profile Analyzer</div>
<div class="r" style="left:40px;top:939px">Settings Manager</div>
<div class="r" style="left:40px;top:951px">Test Framework</div>
<div class="r" style="left:40px;top:962.500px">TextMeshPro</div>
<div class="r" style="left:40px;top:974.500px">Timeline</div>
<div class="r" style="left:40px;top:986.500px">Tutorial Framework</div>
<div class="b" style="left:4px;top:1000px;width:144px;height:4px;overflow:hidden"><div class="r" style="left:36px;top:-2px">Unity UI</div></div>
<div class="b" style="left:4px;top:1004px;width:299px;height:17px;background:#8a8a8a;border-radius:0 0 6px 6px"></div>

<!-- VS Code window -->
<div class="b" style="left:303px;top:452px;width:897px;height:569px;background:#1e1e1e;border-radius:7px 7px 0 7px;box-shadow:-4px 0 10px rgba(0,0,0,.35)"></div>
<div class="b" style="left:303px;top:452px;width:897px;height:26px;background:#383838;border-radius:7px 7px 0 0"></div>
<svg class="s" style="left:303px;top:452px" width="70" height="26"><circle cx="12.500" cy="13" r="4.200" fill="#ec6a5e"/><circle cx="27.500" cy="13" r="4.200" fill="#f4bf4f"/><circle cx="42.500" cy="13" r="4.200" fill="#61c554"/></svg>
<svg class="s" style="left:560px;top:458px" width="34" height="14"><path d="M11 7H2M6 3 2 7 6 11" fill="none" stroke="#6c6c6c"/><path d="M22 7h9M27 3l4 4-4 4" fill="none" stroke="#6c6c6c"/></svg>
<div class="b" style="left:601px;top:456px;width:343px;height:18px;background:#424242;border:1px solid #555;border-radius:5px;box-sizing:border-box"></div>
<svg class="s" style="left:758px;top:459px" width="12" height="12"><circle cx="6.500" cy="5" r="3.500" fill="none" stroke="#aaa"/><path d="M4 8 1.500 10.500" stroke="#aaa"/></svg>
<div class="v" style="left:772px;top:459px;font-size:9px;color:#bbb">検索</div>
<svg class="s" style="left:1118px;top:457px" width="75" height="16" fill="none" stroke="#b4b4b4">
<rect x="2.500" y="2.500" width="10" height="10" rx="1.500"/><path d="M7 2.500V12.500"/>
<rect x="22" y="2.500" width="10" height="10" rx="1.500"/><path d="M22 9H32"/>
<rect x="41" y="2.500" width="10" height="10" rx="1.500"/><path d="M47 2.500V12.500"/>
<rect x="61" y="3" width="4" height="9" rx="1"/><rect x="67.500" y="3" width="4" height="3.500" rx="1"/><rect x="67.500" y="8.500" width="4" height="3.500" rx="1"/>
</svg>

<div class="b" style="left:303px;top:478px;width:897px;height:19px;background:#153a5e"></div>
<svg class="s" style="left:311px;top:481px" width="12" height="13"><path d="M5.500 1 10.500 3V6.500C10.500 9.500 8 11.300 5.500 12 3 11.300.5 9.500.5 6.500V3Z" fill="none" stroke="#5da5e8" stroke-width="1.100"/><path d="M5.500 3.500V7M5.500 8.200V9.200" stroke="#5da5e8"/></svg>
<div class="v" style="left:326px;top:481.500px;font-size:8.900px;color:#d6dde4">制限モードは、安全なコード参照のためのものです。すべての機能を有効にするには、このウィンドウを信頼します。</div>
<div class="v" style="left:808px;top:481.500px;font-size:8.800px;color:#d6dde4;text-decoration:underline">管理</div>
<div class="v" style="left:839px;top:481.500px;font-size:8.800px;color:#d6dde4;text-decoration:underline">詳細情報</div>
<svg class="s" style="left:1178px;top:482px" width="11" height="11"><path d="M1.500 1.500 8.500 8.500M8.500 1.500 1.500 8.500" stroke="#ddd"/></svg>

<div class="b" style="left:303px;top:497px;width:35px;height:507px;background:#333"></div>
<svg class="s" style="left:303px;top:497px" width="35" height="507" fill="none" stroke="#858585" stroke-width="1.200">
<path d="M13 16V10H21L25 14V22H19"/><path d="M9 16H19V27H9Z"/>
<circle cx="20" cy="51" r="5.500"/><path d="M16 55 10 61"/>
<circle cx="13.700" cy="83" r="2.500"/><circle cx="13.700" cy="95.700" r="2.500"/><circle cx="22" cy="86" r="2.500"/><path d="M13.700 85.500V93.200M13.700 93C16 90 21 91.500 22 88.500"/>
<path d="M15 116 26 124 15 131"/><path d="M15 116V124"/><circle cx="12" cy="129" r="3.300"/><path d="M8.500 125.500l1.500 1.500M15.500 125.500l-1.500 1.500M7 129h1.700M15.300 129h1.700M8.500 133l1.500-1.500M15.500 133l-1.500-1.500"/>
<rect x="9" y="157" width="8.500" height="6.500"/><rect x="9" y="163.500" width="8.500" height="6.500"/><rect x="17.500" y="163.500" width="7.500" height="6.500"/><rect x="19.700" y="152" width="7.300" height="7.700" rx="1"/>
<circle cx="17.500" cy="453" r="8.500"/><circle cx="17.500" cy="450.500" r="3"/><path d="M11.500 459c2-4 10-4 12 0"/>
<g transform="translate(17.500,489) scale(.78) translate(-17.500,-492)"><path d="M15.500 481.500H19.500L20 484 22.300 485 24.500 483.500 27 486 25.500 488.500 26.300 490.500H29V494H26.300L25.500 496 27 498.500 24.500 501 22.300 499.500 20 500.500 19.500 503H15.500L15 500.500 12.700 499.500 10.500 501 8 498.500 9.500 496 8.700 494H6V490.500H8.700L9.500 488.500 8 486 10.500 483.500 12.700 485 15 484Z" stroke-width="1.500"/></g><circle cx="17.500" cy="489" r="2.500"/>
</svg>

<div class="b" style="left:338px;top:497px;width:862px;height:26px;background:#252526"></div>
<div class="b" style="left:338px;top:497px;width:108px;height:26px;background:#1e1e1e"></div>
<div class="v" style="left:349px;top:504px;font-size:9px;color:#519aba;font-weight:bold">C<span style="font-size:6px;vertical-align:top">#</span></div>
<div class="v" style="left:362px;top:504px;font-size:10px;color:#d4d4d4">myScript01.cs</div>
<svg class="s" style="left:431px;top:505px" width="10" height="10"><path d="M1.500 1.500 8 8M8 1.500 1.500 8" stroke="#ccc"/></svg>
<svg class="s" style="left:1157px;top:503px" width="36" height="14" fill="none" stroke="#b4b4b4"><rect x="1.500" y="2" width="9.500" height="9.500" rx="1"/><path d="M6.200 2V11.500"/><path d="M21 7h1.200M25 7h1.200M29 7h1.200" stroke-width="1.100"/></svg>

<div class="bc" style="left:351px">Users</div>
<div class="bc" style="left:378px">&gt;</div>
<div class="bc" style="left:388px">bash</div>
<div class="bc" style="left:413.500px">&gt;</div>
<div class="bc" style="left:422px">myUnityProject01</div>
<div class="bc" style="left:505.500px">&gt;</div>
<div class="bc" style="left:514px">Assets</div>
<div class="bc" style="left:547px">&gt;</div>
<div class="bc" style="left:556px">UnityTechnologies</div>
<div class="bc" style="left:641.500px">&gt;</div>
<div class="bc" style="left:650px">3DBeginnerTutorial</div>
<div class="bc" style="left:739.500px">&gt;</div>
<div class="bc" style="left:748px">Scripts</div>
<div class="bc" style="left:785px">&gt;</div>
<div class="v" style="left:795px;top:525.500px;font-size:8px;color:#519aba;font-weight:bold">C<span style="font-size:5px;vertical-align:top">#</span></div>
<div class="bc" style="left:808px">myScript01.cs</div>

<!-- editor -->
<div class="b" style="left:338px;top:539px;width:782px;height:1px;background:#2b2b2b"></div>
<div class="b" style="left:338px;top:558px;width:782px;height:1px;background:#2b2b2b"></div>
<div class="b" style="left:403px;top:539px;width:40px;height:60px;background:#484848"></div>
<div class="b" style="left:403px;top:660px;width:1px;height:220px;background:#3a3a3a"></div>

<div class="ln" style="top:539px;color:#c6c6c6">1</div>
<div class="ln" style="top:559px">2</div>
<div class="ln" style="top:579px">3</div>
<div class="ln" style="top:599px">4</div>
<div class="ln" style="top:619.500px">5</div>
<div class="ln" style="top:639.500px">6</div>
<div class="ln" style="top:659.500px">7</div>
<div class="ln" style="top:679.500px">8</div>
<div class="ln" style="top:699.500px">9</div>
<div class="ln" style="top:719.500px">10</div>
<div class="ln" style="top:740px">11</div>
<div class="ln" style="top:760px">12</div>
<div class="ln" style="top:780px">13</div>
<div class="ln" style="top:800px">14</div>
<div class="ln" style="top:820px">15</div>
<div class="ln" style="top:840.500px">16</div>
<div class="ln" style="top:860.500px">17</div>
<div class="ln" style="top:880.500px">18</div>
<div class="ln" style="top:900.500px">19</div>

<div class="c" style="top:539px"><span class="k">using</span> <span class="t">System</span>.<span class="t">Collections</span>;</div>
<div class="c" style="top:559px"><span class="k">using</span> <span class="t">System</span>.<span class="t">Collections</span>.<span class="t">Generic</span>;</div>
<div class="c" style="top:579px"><span class="k">using</span> <span class="t">UnityEngine</span>;</div>
<div class="c" style="top:619.500px"><span class="w">public class</span> <span class="t">myScript01</span> : <span class="t">MonoBehaviour</span></div>
<div class="c" style="top:639.500px"><span class="y">{</span></div>
<div class="c" style="top:659.500px"><span class="g">    // Start is called before the first frame update</span></div>
<div class="c" style="top:679.500px">    <span class="w">void</span> <span class="f">Start</span><span class="p">()</span></div>
<div class="c" style="top:699.500px">    <span class="p">{</span></div>
<div class="c" style="top:740px">    <span class="p">}</span></div>
<div class="c" style="top:780px"><span class="g">    // Update is called once per frame</span></div>
<div class="c" style="top:800px">    <span class="w">void</span> <span class="f">Update</span><span class="p">()</span></div>
<div class="c" style="top:820px">    <span class="p">{</span></div>
<div class="c" style="top:860.500px">    <span class="p">}</span></div>
<div class="c" style="top:880.500px"><span class="y">}</span></div>

<!-- minimap -->
<div class="b" style="left:1120px;top:539px;width:70px;height:5px;background:#4a4a4a"></div>
<svg class="s" style="left:1120px;top:539px" width="70" height="40">
<path d="M1 1.500H24M1 3H28" stroke="#5a8a80" stroke-width=".8"/>
<path d="M1 7H35" stroke="#4e7ea8" stroke-width=".8"/><path d="M1 8.500H2" stroke="#c9a227" stroke-width=".8"/>
<path d="M4 10H39" stroke="#4f7043" stroke-width=".8"/><path d="M4 11.500H14" stroke="#8a8a5a" stroke-width=".8"/><path d="M4 13H5M4 17H5" stroke="#a55aa0" stroke-width=".8"/>
<path d="M4 21H29" stroke="#4f7043" stroke-width=".8"/><path d="M4 22.500H15" stroke="#8a8a5a" stroke-width=".8"/><path d="M4 24H5M4 28H5" stroke="#a55aa0" stroke-width=".8"/><path d="M1 30H2" stroke="#c9a227" stroke-width=".8"/>
</svg>
<div class="b" style="left:1192px;top:539px;width:5px;height:33px;background:#5a5a5a"></div>
<div class="b" style="left:1189px;top:540px;width:1px;height:463px;background:#2a2a2a"></div>

<!-- notification -->
<div class="b" style="left:855px;top:931px;width:336px;height:64px;background:#252526;border-radius:3px;box-shadow:0 0 6px rgba(0,0,0,.5)"></div>
<svg class="s" style="left:862px;top:941px" width="14" height="14"><circle cx="6.800" cy="6.800" r="5.200" fill="none" stroke="#3f88d8" stroke-width="1.100"/><path d="M6.800 4.500v.9M6.800 6.300v3" stroke="#3f88d8"/></svg>
<div class="v" style="left:878.500px;top:941px;font-size:9.650px;color:#a8a8a8">C# にお勧めの拡張機能をインストールしますか?</div>
<svg class="s" style="left:1149px;top:940px" width="34" height="14" fill="none" stroke="#a0a0a0"><circle cx="7" cy="7" r="4.400" stroke-dasharray="2 .7" stroke-width="1.500"/><circle cx="7" cy="7" r="1.800"/><path d="M23 3 30 10M30 3 23 10" stroke-width="1.100"/></svg>
<div class="b" style="left:1007px;top:963px;width:90px;height:20.500px;background:#2a6099;border-radius:2px"></div>
<div class="b" style="left:1076px;top:966px;width:1px;height:15px;background:#6b93bd"></div>
<div class="v" style="left:1016px;top:967.500px;font-size:8.700px;color:#e4e4e4">インストール</div>
<svg class="s" style="left:1081px;top:969px" width="11" height="9"><path d="M1.500 2.500 5.500 6.500 9.500 2.500" fill="none" stroke="#d8d8d8"/></svg>
<div class="b" style="left:1104px;top:963px;width:79px;height:20.500px;background:#353537;border-radius:2px"></div>
<div class="v" style="left:1113px;top:967.500px;font-size:8.800px;color:#d4d4d4">推奨事項の表示</div>

<!-- status bar -->
<div class="b" style="left:303px;top:1004px;width:897px;height:16px;background:#5a2873"></div>
<div class="b" style="left:303px;top:1004px;width:72px;height:16px;background:#3a1a55;border-radius:0 0 0 6px"></div>
<div class="b" style="left:303px;top:1020px;width:897px;height:1px;background:#2d1a6b"></div>
<svg class="s" style="left:310px;top:1006px" width="12" height="12"><path d="M5.500 1 10 2.600V6C10 8.600 7.800 10 5.500 11 3.200 10 1 8.600 1 6V2.600Z" fill="none" stroke="#e4dbe8"/><path d="M5.500 3.500V6.500M5.500 7.500V8.500" stroke="#e4dbe8" stroke-width=".8"/></svg>
<div class="v" style="left:323px;top:1006px;font-size:9px;color:#e6dcea">制限モード</div>
<svg class="s" style="left:381px;top:1006px" width="33" height="12" fill="none" stroke="#dcd2e2" stroke-width=".8"><circle cx="5" cy="6" r="4"/><path d="M3.200 4.200 6.800 7.800M6.800 4.200 3.200 7.800"/><path d="M26.500 2 31 10.500H22Z"/></svg>
<div class="v" style="left:394px;top:1006px;font-size:9.300px;color:#e6dcea">0</div>
<div class="v" style="left:415.500px;top:1006px;font-size:9.300px;color:#e6dcea">0</div>
<svg class="s" style="left:433px;top:1006px" width="11" height="12" fill="none" stroke="#dcd2e2" stroke-width=".9"><path d="M1.500 6A4 4 0 0 1 8.500 3.500M9.500 6A4 4 0 0 1 2.500 8.500"/><path d="M8.800 1.500V4H6.300M2.200 10.500V8H4.700"/></svg>
<div class="v" style="left:446px;top:1006px;font-size:9px;color:#e6dcea">拡張機能をアクティブ化しています...</div>
<div class="v" style="left:607px;top:1006px;font-size:9.300px;color:#e6dcea">-- NORMAL --</div>
<div class="v" style="left:959px;top:1006px;font-size:9.300px;color:#e6dcea">行 1、列 1</div>
<div class="v" style="left:1014px;top:1006px;font-size:9.300px;color:#e6dcea">スペース: 4</div>
<div class="v" style="left:1070px;top:1006px;font-size:9.300px;color:#e6dcea">UTF-8</div>
<div class="v" style="left:1109px;top:1006px;font-size:9.300px;color:#e6dcea">LF</div>
<div class="v" style="left:1132px;top:1006px;font-size:9.300px;color:#e6dcea">C#</div>
<svg class="s" style="left:1155px;top:1005px" width="36" height="14" fill="none" stroke="#e6dcea" stroke-width=".9"><path d="M6 2H13L10.500 7 12 11 8 8.500 5 12 6.500 7Z"/><path d="M25 10.500V6a3.500 3.500 0 0 1 6-2.500M23.500 10.500H33.500V9M27.500 12h2"/><circle cx="32.500" cy="3.500" r="2" fill="#fff" stroke="none"/></svg>
</div>
</body>
</html>
